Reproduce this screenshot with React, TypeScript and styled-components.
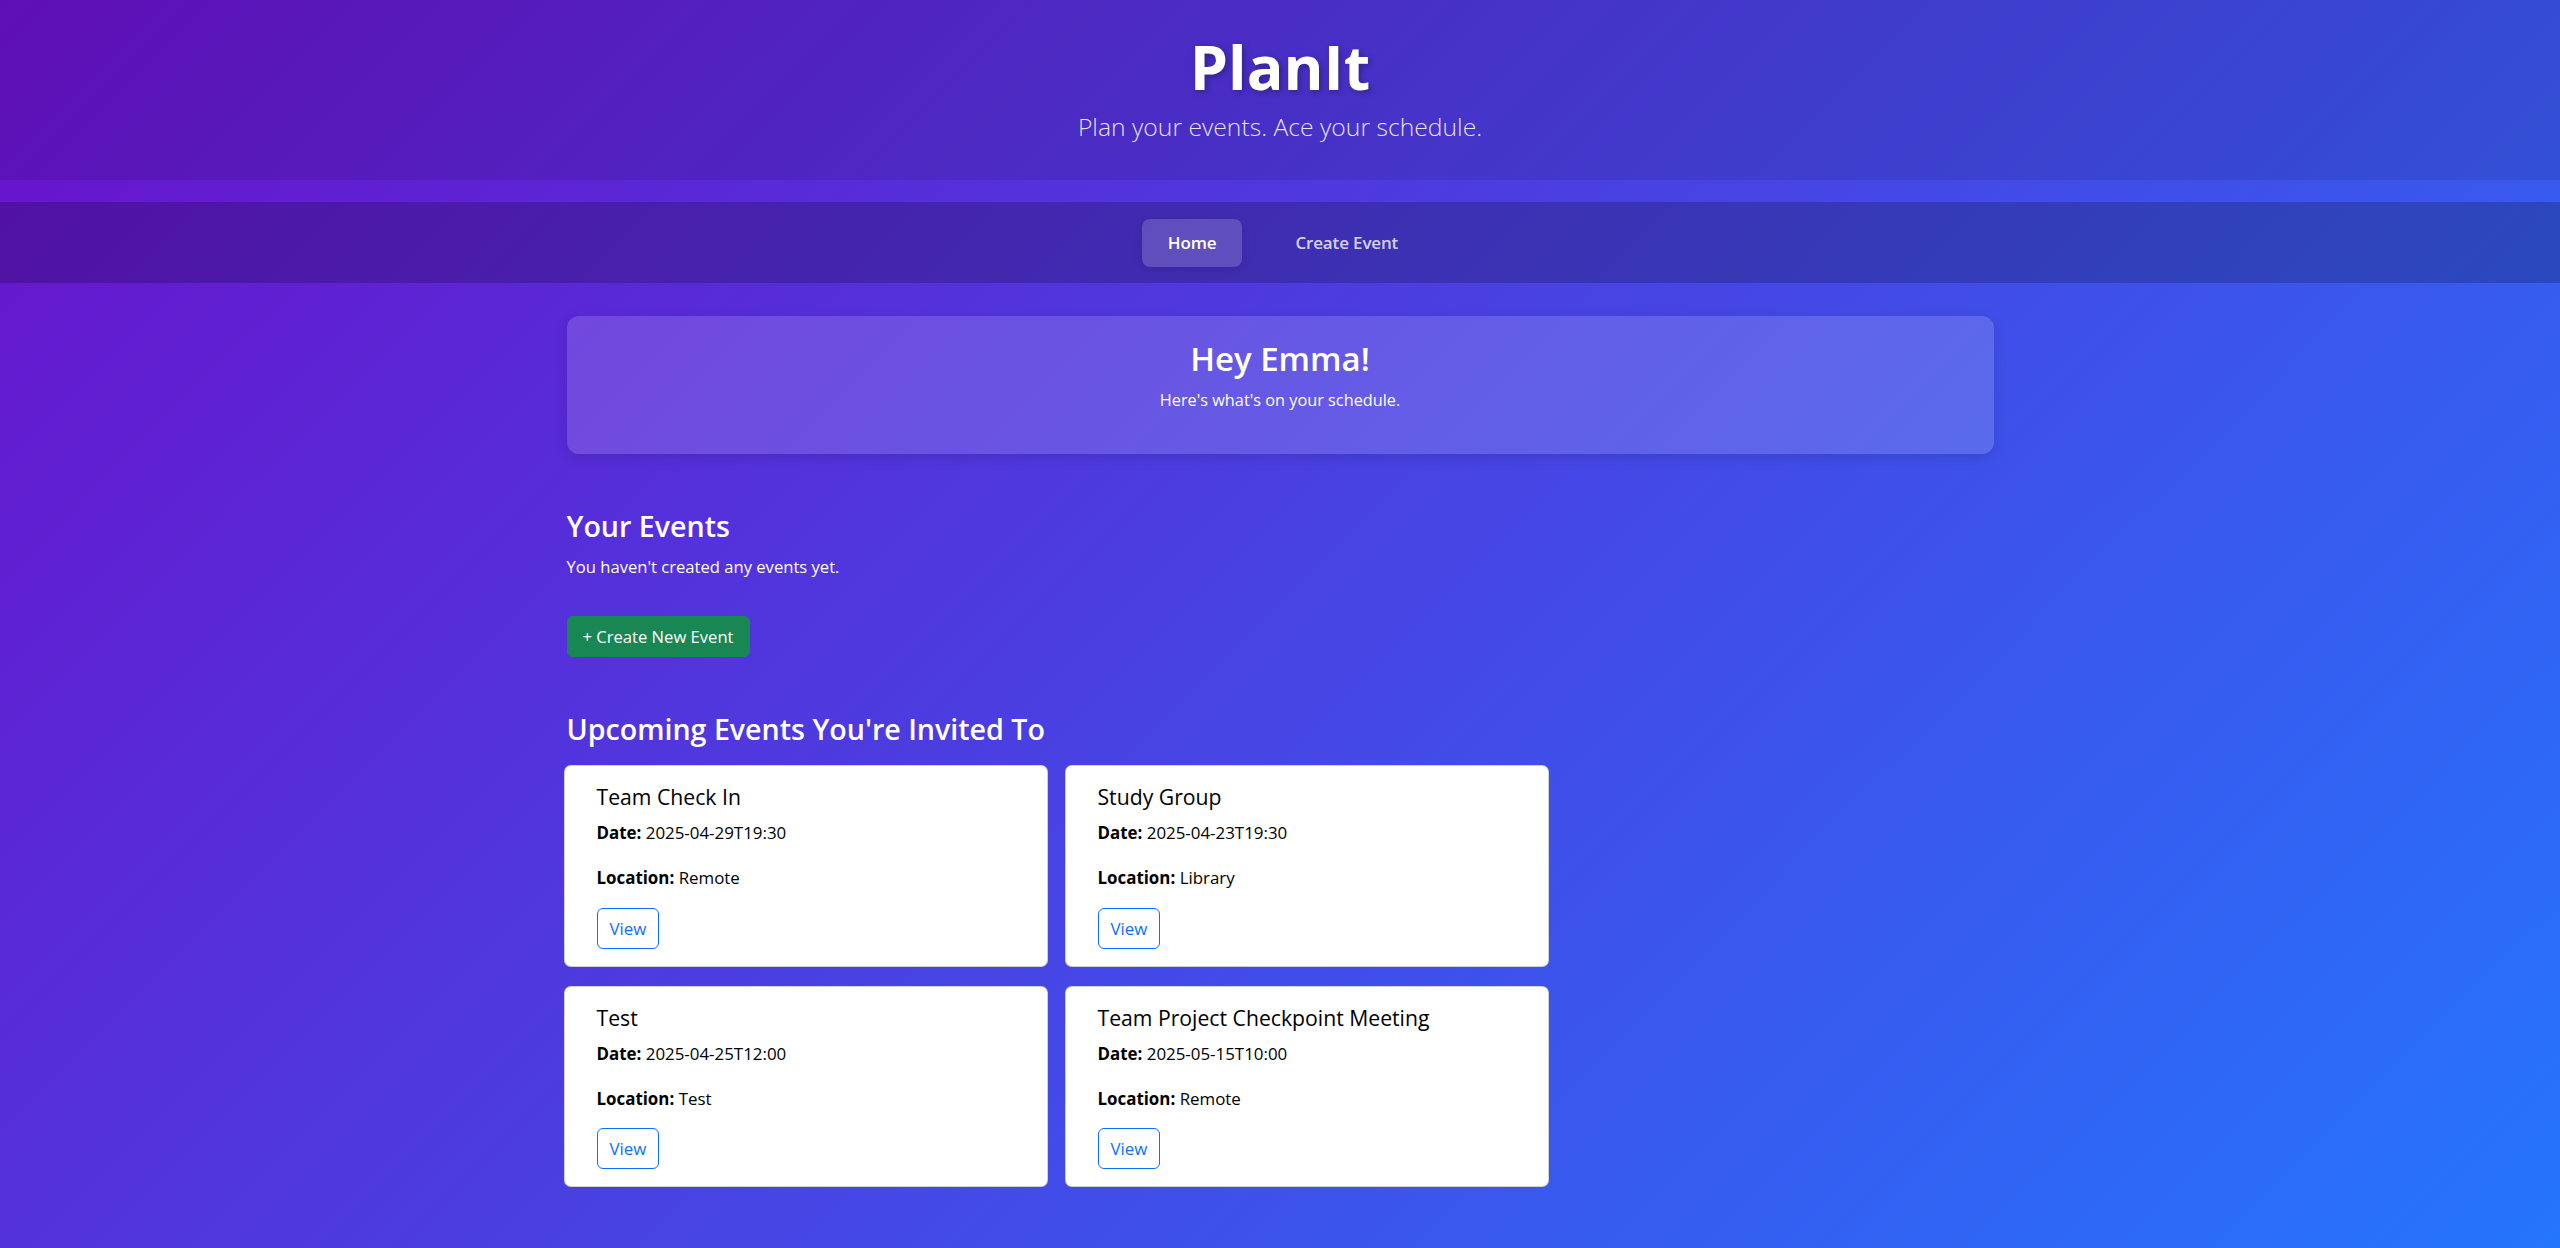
import React from "react";
import styled, { createGlobalStyle } from "styled-components";

const GlobalStyle = createGlobalStyle`
  html {
    height: 100%;
  }
  body {
    margin: 0;
    min-height: 100%;
    font-family: "Open Sans", "Noto Sans", "Liberation Sans", sans-serif;
    color: #fff;
    background: linear-gradient(135deg, #6a11cb 0%, #2575fc 100%);
    background-attachment: fixed;
  }
  * {
    box-sizing: border-box;
  }
`;

const Page = styled.div`
  min-height: 100vh;
  padding-bottom: 40px;
`;

const Header = styled.header`
  background: rgba(0, 0, 0, 0.1);
  text-align: center;
  padding: 30px 0 34px;
  margin-bottom: 22px;
`;

const Title = styled.h1`
  margin: 0;
  font-size: 61px;
  line-height: 1.2;
  font-weight: 700;
  color: #fff;
  text-shadow: 2px 2px 6px rgba(0, 0, 0, 0.3);
`;

const Tagline = styled.p`
  margin: 5px 0 0;
  font-size: 24.7px;
  line-height: 37.5px;
  font-weight: 300;
  color: rgba(255, 255, 255, 0.88);
`;

const Nav = styled.nav`
  background: rgba(0, 0, 0, 0.2);
  display: flex;
  justify-content: center;
  gap: 27px;
  padding: 17px 0 16px 6px;
`;

const NavLink = styled.a<{ $active?: boolean }>`
  display: inline-block;
  padding: 11.25px 26px;
  font-size: 17px;
  line-height: 25.5px;
  font-weight: 600;
  letter-spacing: -0.15px;
  text-decoration: none;
  border-radius: 8px;
  color: ${(p) => (p.$active ? "#fff" : "rgba(255, 255, 255, 0.8)")};
  background: ${(p) => (p.$active ? "rgba(255, 255, 255, 0.17)" : "transparent")};
  box-shadow: ${(p) => (p.$active ? "0 2px 8px rgba(0, 0, 0, 0.12)" : "none")};
`;

const Main = styled.main`
  width: 1427px;
  margin: 33px auto 0;
`;

const WelcomeCard = styled.section`
  background: rgba(255, 255, 255, 0.15);
  border-radius: 12px;
  padding: 21px 0 1px;
  text-align: center;
  box-shadow: 0 4px 14px rgba(0, 0, 0, 0.12);
`;

const Greeting = styled.h2`
  margin: 0 0 8px;
  font-size: 33px;
  line-height: 43px;
  font-weight: 600;
`;

const GreetingSub = styled.p`
  margin: 0 0 40px;
  font-size: 16.3px;
  line-height: 25.5px;
`;

const SectionTitle = styled.h2<{ $top: number }>`
  margin: ${(p) => p.$top}px 0 0;
  font-size: 28.6px;
  line-height: 34.8px;
  font-weight: 600;
`;

const Note = styled.p`
  margin: 10px 0 0;
  font-size: 16.6px;
  line-height: 25.5px;
`;

const CreateButton = styled.button`
  margin-top: 37px;
  display: inline-block;
  font-family: inherit;
  font-size: 16.6px;
  line-height: 27px;
  padding: 6px 15px;
  color: #fff;
  background: #198754;
  border: 1px solid #198754;
  border-radius: 6px;
  cursor: pointer;
`;

const CardGrid = styled.div`
  margin: 18px 0 0 -3px;
  display: grid;
  grid-template-columns: repeat(2, 484px);
  column-gap: 17px;
  row-gap: 19px;
`;

const EventCard = styled.article`
  background: #fff;
  color: #212529;
  border: 1px solid rgba(0, 0, 0, 0.175);
  border-radius: 7px;
  padding: 18px 32px 17px;
`;

const EventTitle = styled.h3`
  margin: 0 0 10px;
  font-size: 21.2px;
  line-height: 26px;
  font-weight: 500;
  color: #000;
`;

const Detail = styled.p<{ $gap: number }>`
  margin: 0 0 ${(p) => p.$gap}px;
  font-size: 16.9px;
  line-height: 25.5px;
  color: #000;

  strong {
    font-weight: 700;
  }
`;

const ViewButton = styled.button`
  display: inline-block;
  font-family: inherit;
  font-size: 16.9px;
  line-height: 25.5px;
  padding: 6.75px 12px;
  color: #0d6efd;
  background: transparent;
  border: 1px solid #0d6efd;
  border-radius: 6px;
  cursor: pointer;
`;

type EventItem = { title: string; date: string; location: string };

const invited: EventItem[] = [
  { title: "Team Check In", date: "2025-04-29T19:30", location: "Remote" },
  { title: "Study Group", date: "2025-04-23T19:30", location: "Library" },
  { title: "Test", date: "2025-04-25T12:00", location: "Test" },
  { title: "Team Project Checkpoint Meeting", date: "2025-05-15T10:00", location: "Remote" },
];

export default function App() {
  return (
    <>
      <GlobalStyle />
      <Page>
        <Header>
          <Title>PlanIt</Title>
          <Tagline>Plan your events. Ace your schedule.</Tagline>
        </Header>
        <Nav>
          <NavLink href="#" $active>
            Home
          </NavLink>
          <NavLink href="#">Create Event</NavLink>
        </Nav>
        <Main>
          <WelcomeCard>
            <Greeting>Hey Emma!</Greeting>
            <GreetingSub>Here's what's on your schedule.</GreetingSub>
          </WelcomeCard>

          <SectionTitle $top={55}>Your Events</SectionTitle>
          <Note>You haven't created any events yet.</Note>
          <CreateButton>+ Create New Event</CreateButton>

          <SectionTitle $top={55}>Upcoming Events You're Invited To</SectionTitle>
          <CardGrid>
            {invited.map((ev) => (
              <EventCard key={ev.title}>
                <EventTitle>{ev.title}</EventTitle>
                <Detail $gap={19.5}>
                  <strong>Date:</strong> {ev.date}
                </Detail>
                <Detail $gap={17}>
                  <strong>Location:</strong> {ev.location}
                </Detail>
                <ViewButton>View</ViewButton>
              </EventCard>
            ))}
          </CardGrid>
        </Main>
      </Page>
    </>
  );
}
